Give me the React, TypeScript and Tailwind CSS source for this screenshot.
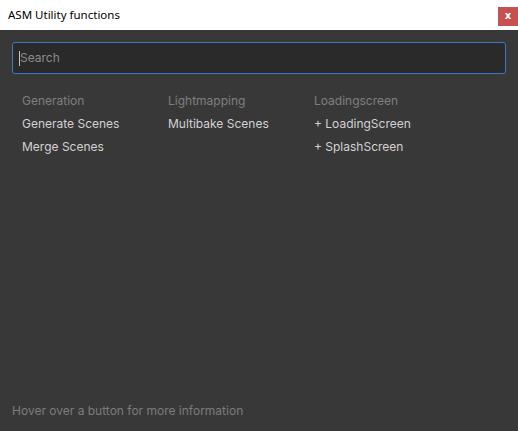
import React from 'react'

const COLUMNS = [
  { title: 'Generation', items: ['Generate Scenes', 'Merge Scenes'] },
  { title: 'Lightmapping', items: ['Multibake Scenes'] },
  { title: 'Loadingscreen', items: ['+ LoadingScreen', '+ SplashScreen'] },
]

export default function App() {
  return (
    <div className="w-[518px] h-[431px] flex flex-col bg-[#383838] overflow-hidden">
      {/* title bar */}
      <div className="h-[30px] bg-white flex items-center justify-between pl-2">
        <span className="text-[11.5px] text-black" style={{ fontFamily: '"Noto Sans", sans-serif' }}>
          ASM Utility functions
        </span>
        <button className="w-5 h-[19px] mt-[2px] bg-[#c75050] text-white text-[10px] font-bold leading-none flex items-center justify-center" style={{ fontFamily: '"DejaVu Sans", sans-serif' }}>
          x
        </button>
      </div>

      <div className="flex-1 flex flex-col px-3 pt-3 pb-[12px] text-[12px]" style={{ fontFamily: 'Inter, sans-serif' }}>
        {/* search */}
        <div className="h-[32px] rounded-[3px] border border-[#3a79c5] bg-[#2a2a2a] flex items-center px-[6px]">
          <span className="w-px h-[15px] bg-[#c4c4c4]" />
          <span className="text-[#8a8a8a] text-[12px]">Search</span>
        </div>

        {/* functions */}
        <div className="flex pl-[10px] mt-[15px]">
          {COLUMNS.map(col => (
            <div key={col.title} className="w-[146px] flex flex-col">
              <div className="h-[23px] leading-[23px] text-[#7f7f7f]">{col.title}</div>
              {col.items.map(item => (
                <div key={item} className="h-[23px] leading-[23px] text-[#d2d2d2]">{item}</div>
              ))}
            </div>
          ))}
        </div>

        <div className="flex-1" />
        <div className="text-[#7c7c7c] leading-[16px]">Hover over a button for more information</div>
      </div>
    </div>
  )
}
